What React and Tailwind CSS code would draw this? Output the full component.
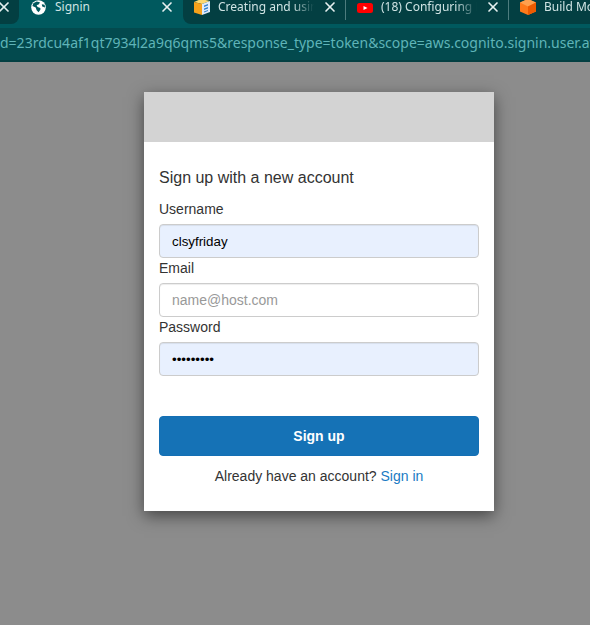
import { X } from "lucide-react"

function Globe() {
  return (
    <svg width="15" height="15" viewBox="0 0 16 16" className="shrink-0">
      <circle cx="8" cy="8" r="7.8" fill="#fff" />
      <path d="M2.5 3.5l3.5-2 3.5 1-1 2-2.5 1 1 2 3 1v2l-2 2.500-2-2-1-3-3.500-1.500z" fill="#00595e" />
      <path d="M11.500 4.500l3 .5.500 3-3-1z" fill="#00595e" />
    </svg>
  )
}

function BookBox() {
  return (
    <svg width="16" height="16" viewBox="0 0 16 16" className="shrink-0">
      <path d="M0 3l7-3 9 2-8 3z" fill="#fdd76e" />
      <path d="M0 3l8 2v11l-8-2.500z" fill="#f7a11a" />
      <path d="M8 5l8-3v11l-8 3z" fill="#dfeafa" />
      <path d="M10 6.500l4-1.500v1.500l-4 1.500zM10 9.500l4-1.500v1.500l-4 1.500zM10 12.500l4-1.500v1l-4 1.500z" fill="#2f80cf" />
    </svg>
  )
}

function Youtube() {
  return (
    <svg width="16" height="10" viewBox="0 0 16 10" className="shrink-0 mt-[1px]">
      <rect width="16" height="10" rx="2.500" fill="#f00" />
      <path d="M6.500 3l4 2-4 2z" fill="#fff" />
    </svg>
  )
}

function Cube() {
  return (
    <svg width="16" height="16" viewBox="0 0 16 16" className="shrink-0">
      <path d="M8 0l8 3.500v9L8 16l-8-3.500v-9z" fill="#ff7a1a" />
      <path d="M8 0l8 3.500L8 7.500 0 3.500z" fill="#ffa04d" />
      <path d="M8 7.500l8-4v9L8 16z" fill="#ee5a00" />
    </svg>
  )
}

function Close() {
  return <X size={16} strokeWidth={2.5} className="shrink-0 text-[#e6f0f0]" />
}

function Tab({ icon, title, divider }) {
  return (
    <div className="w-[163px] shrink-0 flex items-center pl-[11px] pr-[8px] gap-[8px] relative">
      {icon}
      <span className="flex-1 min-w-0 overflow-hidden whitespace-nowrap text-[12px] text-[#cfe3e3] [mask-image:linear-gradient(to_right,black_78%,transparent)]">
        {title}
      </span>
      <Close />
      {divider && <span className="absolute right-0 top-0 h-[20px] w-px bg-[#4d7c7e]" />}
    </div>
  )
}

function Field({ label, value, placeholder, filled, type = "text" }) {
  return (
    <div className="flex flex-col">
      <label className="text-[14px] leading-[20px] text-[#333] mb-[5px]">{label}</label>
      <input
        readOnly
        type={type}
        value={value}
        placeholder={placeholder}
        className={`h-[34px] rounded-[4px] border border-[#ccc] px-[12px] text-black outline-none placeholder:text-[#999] shadow-[inset_0_1px_1px_rgba(0,0,0,0.075)] ${filled ? "bg-[#e8f0fe] text-[13.33px]" : "bg-white text-[14px]"}`}
      />
    </div>
  )
}

export default function App() {
  return (
    <div className="w-[590px] h-[625px] overflow-hidden flex flex-col bg-[#8c8c8c] font-['Liberation_Sans',Arial,sans-serif]">
      {/* tab strip */}
      <div className="h-[28px] shrink-0 bg-[#00595e] font-['Noto_Sans','Open_Sans',sans-serif]">
        <div className="h-[24px] flex overflow-hidden">
          <div className="w-[19px] shrink-0 rounded-br-[8px] bg-[#033f42] flex items-center justify-end pr-[7px] pb-[10px]">
            <Close />
          </div>
          <div className="w-[164px] shrink-0 flex items-center pl-[12px] pr-[8px] pb-[10px] gap-[9px]">
            <Globe />
            <span className="flex-1 text-[12px] text-[#cfe3e3]">Signin</span>
            <Close />
          </div>
          <div className="flex-1 flex rounded-bl-[8px] bg-[#033f42] pb-[10px]">
            <Tab icon={<BookBox />} title="Creating and using" divider />
            <Tab icon={<Youtube />} title="(18) Configuring Lambda" divider />
            <Tab icon={<Cube />} title="Build Modern" />
          </div>
        </div>
      </div>

      {/* url bar */}
      <div className="h-[34px] shrink-0 border-b-2 border-[#033f42]">
        <div className="h-[32px] bg-[#034a4e] overflow-hidden whitespace-nowrap text-[14px] leading-[30px] text-[#5fb4b8] font-['Noto_Sans','Open_Sans',sans-serif]">
          d=23rdcu4af1qt7934l2a9q6qms5&amp;response_type=token&amp;scope=aws.cognito.signin.user.aws
        </div>
      </div>

      {/* page */}
      <div className="flex-1 pt-[30px]">
        <div className="ml-[144px] w-[350px] bg-white shadow-[0_5px_15px_rgba(0,0,0,0.5)]">
          <div className="h-[50px] bg-[#d3d3d3]" />
          <div className="px-[15px] pt-[26px] pb-[25px]">
            <h1 className="text-[16px] leading-[20px] text-[#333] mb-[11px]">Sign up with a new account</h1>
            <div className="flex flex-col">
              <Field label="Username" value="clsyfriday" filled />
              <Field label="Email" placeholder="name@host.com" />
              <Field label="Password" value="secret123" type="password" filled />
            </div>
            <button className="mt-[40px] w-full h-[40px] rounded-[4px] bg-[#1572b6] border border-[#146fb4] text-white text-[14px] font-bold">
              Sign up
            </button>
            <p className="mt-[10px] text-center text-[14px] leading-[20px] text-[#333]">
              Already have an account? <a className="text-[#1a7bc4]">Sign in</a>
            </p>
          </div>
        </div>
      </div>
    </div>
  )
}
